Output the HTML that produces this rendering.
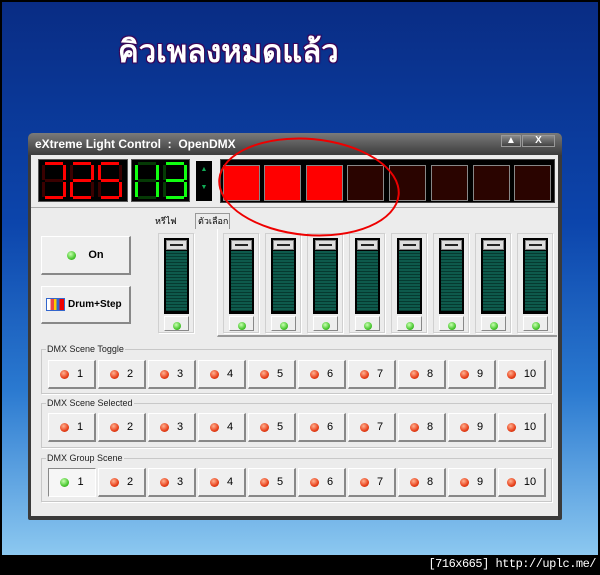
<!DOCTYPE html>
<html><head><meta charset="utf-8"><style>
*{margin:0;padding:0;box-sizing:border-box}
body{width:600px;height:575px;position:relative;overflow:hidden;background:#000;font-family:"Liberation Sans",sans-serif}
.bg{position:absolute;left:2px;top:2px;width:596px;height:553px;background:linear-gradient(180deg,#092c84 0%,#0c45ac 40%,#2a79d0 70%,#8cc8f0 100%)}
.a{position:absolute}
.title{left:118px;top:26px;font:bold 31px "Liberation Sans","Noto Sans CJK SC","WenQuanYi Zen Hei",sans-serif;color:#fff;text-shadow:0 0 2px #301040,1px 1px 0 #400060,-1px -1px 0 #400060,1px -1px 0 #400060,-1px 1px 0 #400060}
.win{left:28px;top:133px;width:534px;height:387px;background:#3a3a3a;border-radius:5px 5px 2px 2px}
.tb{left:0;top:0;width:534px;height:22px;background:linear-gradient(#7a7a7a,#3c3c3c);border-radius:5px 5px 0 0;color:#fff;font:bold 12px "Liberation Sans",sans-serif;padding:4px 7px}
.body{left:3px;top:22px;width:527px;height:361px;background:#ececec}
.tbtn{top:2px;height:12px;background:linear-gradient(#888,#444);border:1px solid #999;color:#fff;font:bold 10px sans-serif;text-align:center;line-height:10px}
.seg{background:#000;border:1px solid #555}
.lamps{left:189px;top:4px;width:335px;height:44px;background:#000;border:1px solid #444}
.lp{top:5px;width:37px;height:36px;border:1px solid #888}
.btn{background:#efefef;border:1px solid #fff;border-right:2px solid #888;border-bottom:2px solid #888;font:11px "Liberation Sans",sans-serif;color:#000;white-space:nowrap}
.led{display:inline-block;width:9px;height:9px;border-radius:50%;background:radial-gradient(circle at 40% 35%,#ffb090,#e8401a 60%,#a02000)}
.g{background:radial-gradient(circle at 40% 35%,#c8ffb0,#4ac830 60%,#208010)}
.grp{border:1px solid #c8c8c8;box-shadow:1px 1px 0 #fff}
.gl{font:9px "Liberation Sans",sans-serif;color:#222;background:#ececec;padding:0 1px}
.sb{width:48px;height:29px;text-align:center;line-height:26px}
.sb .led{vertical-align:middle;margin-right:8px}
.fd{width:36px;height:100px;border:1px solid #d0d0d0;box-shadow:1px 1px 0 #fff}
.tr{position:absolute;left:5px;top:4px;width:25px;height:76px;background:#000;padding:2px}
.tr i{display:block;width:21px;height:10px;background:#ddd;border:1px solid #888;position:relative}
.tr i:after{content:"";position:absolute;left:3px;top:3px;width:13px;height:2px;background:#222}
.tr b{display:block;width:21px;height:60px;background:repeating-linear-gradient(#0e5a4c 0 2px,#063a30 2px 3px);margin-top:1px}
.fb{position:absolute;left:5px;top:82px;width:25px;height:15px;background:#eee;border:1px solid #fff;border-right:1px solid #888;border-bottom:1px solid #888;text-align:center}
.fb .led{width:8px;height:8px;margin-top:2px}
</style></head><body>
<div class="bg"></div>
<div class="a title">คิวเพลงหมดแล้ว</div>
<div class="a win">
<div class="a tb">eXtreme Light Control&nbsp; :&nbsp; OpenDMX</div>
<div class="a tbtn" style="left:473px;width:20px">▲</div>
<div class="a tbtn" style="left:494px;width:33px">X</div>
<div class="a body">
<div class="a seg" style="left:7px;top:4px;width:90px;height:43px">
<svg width="88" height="41" viewBox="0 0 88 41">
<g fill="#3a0000">
<rect x="6" y="2" width="18" height="3"/><rect x="3" y="5" width="3" height="15"/><rect x="24" y="5" width="3" height="15"/><rect x="6" y="19" width="18" height="3"/><rect x="3" y="22" width="3" height="15"/><rect x="24" y="22" width="3" height="15"/><rect x="6" y="36" width="18" height="3"/>
<rect x="34" y="2" width="18" height="3"/><rect x="31" y="5" width="3" height="15"/><rect x="52" y="5" width="3" height="15"/><rect x="34" y="19" width="18" height="3"/><rect x="31" y="22" width="3" height="15"/><rect x="52" y="22" width="3" height="15"/><rect x="34" y="36" width="18" height="3"/>
<rect x="62" y="2" width="18" height="3"/><rect x="59" y="5" width="3" height="15"/><rect x="80" y="5" width="3" height="15"/><rect x="62" y="19" width="18" height="3"/><rect x="59" y="22" width="3" height="15"/><rect x="80" y="22" width="3" height="15"/><rect x="62" y="36" width="18" height="3"/>
</g>
<g fill="#f00">
<rect x="6" y="2" width="18" height="3"/><rect x="24" y="5" width="3" height="15"/><rect x="24" y="22" width="3" height="15"/><rect x="6" y="36" width="18" height="3"/>
<rect x="34" y="2" width="18" height="3"/><rect x="52" y="5" width="3" height="15"/><rect x="34" y="19" width="18" height="3"/><rect x="31" y="22" width="3" height="15"/><rect x="34" y="36" width="18" height="3"/>
<rect x="62" y="2" width="18" height="3"/><rect x="59" y="5" width="3" height="15"/><rect x="62" y="19" width="18" height="3"/><rect x="80" y="22" width="3" height="15"/><rect x="62" y="36" width="18" height="3"/>
</g></svg></div>
<div class="a seg" style="left:100px;top:4px;width:59px;height:43px">
<svg width="57" height="41" viewBox="0 0 57 41">
<g fill="#053a05">
<rect x="6" y="2" width="18" height="3"/><rect x="3" y="5" width="3" height="15"/><rect x="24" y="5" width="3" height="15"/><rect x="6" y="19" width="18" height="3"/><rect x="3" y="22" width="3" height="15"/><rect x="24" y="22" width="3" height="15"/><rect x="6" y="36" width="18" height="3"/>
<rect x="34" y="2" width="18" height="3"/><rect x="31" y="5" width="3" height="15"/><rect x="52" y="5" width="3" height="15"/><rect x="34" y="19" width="18" height="3"/><rect x="31" y="22" width="3" height="15"/><rect x="52" y="22" width="3" height="15"/><rect x="34" y="36" width="18" height="3"/>
</g>
<g fill="#1f1">
<rect x="3" y="5" width="3" height="15"/><rect x="3" y="22" width="3" height="15"/><rect x="24" y="5" width="3" height="15"/><rect x="24" y="22" width="3" height="15"/>
<rect x="34" y="2" width="18" height="3"/><rect x="52" y="5" width="3" height="15"/><rect x="34" y="19" width="18" height="3"/><rect x="52" y="22" width="3" height="15"/><rect x="34" y="36" width="18" height="3"/>
</g></svg></div>
<div class="a" style="left:165px;top:6px;width:16px;height:40px;background:#000;color:#1a5;font:7px sans-serif;text-align:center;line-height:18px">▲<br>▼</div>
<div class="a lamps">
<div class="a lp" style="left:2px;background:#f00"></div>
<div class="a lp" style="left:43px;background:#f00"></div>
<div class="a lp" style="left:85px;background:#f00"></div>
<div class="a lp" style="left:126px;background:#2a0400"></div>
<div class="a lp" style="left:168px;background:#2a0400"></div>
<div class="a lp" style="left:210px;background:#2a0400"></div>
<div class="a lp" style="left:252px;background:#2a0400"></div>
<div class="a lp" style="left:293px;background:#2a0400"></div>
</div>
<div class="a" style="left:0;top:52px;width:527px;height:1px;background:#aaa"></div>
<div class="a btn" style="left:10px;top:81px;width:90px;height:39px;text-align:center;line-height:37px;font-weight:bold"><span class="led g" style="vertical-align:middle;margin-right:12px"></span>On</div>
<div class="a btn" style="left:10px;top:131px;width:90px;height:38px;line-height:36px;font-weight:bold;font-size:10px;padding-left:4px"><span style="display:inline-block;vertical-align:middle;width:19px;height:13px;border:1px solid #36c;background:linear-gradient(90deg,#fff 20%,#e44 20% 40%,#fc0 40% 55%,#36c 55% 75%,#e00 75%);margin-right:3px"></span>Drum+Step</div>
<div class="a" style="left:124px;top:59px;font:9px 'Liberation Sans','Noto Sans CJK SC',sans-serif;white-space:nowrap">หรีไฟ</div>
<div class="a" style="left:164px;top:58px;width:35px;height:16px;border:1px solid #999;border-bottom:none;font:9px 'Liberation Sans','Noto Sans CJK SC',sans-serif;padding-left:2px;white-space:nowrap;overflow:hidden">ตัวเลือก</div>
<div class="a fd" style="left:127px;top:78px"><div class="tr"><i></i><b></b></div><div class="fb"><span class="led g"></span></div></div>
<div class="a" style="left:186px;top:74px;width:340px;height:108px;border-left:1px solid #fff;border-bottom:2px solid #999"></div>
<div class="a fd" style="left:192px;top:78px"><div class="tr"><i></i><b></b></div><div class="fb"><span class="led g"></span></div></div>
<div class="a fd" style="left:234px;top:78px"><div class="tr"><i></i><b></b></div><div class="fb"><span class="led g"></span></div></div>
<div class="a fd" style="left:276px;top:78px"><div class="tr"><i></i><b></b></div><div class="fb"><span class="led g"></span></div></div>
<div class="a fd" style="left:318px;top:78px"><div class="tr"><i></i><b></b></div><div class="fb"><span class="led g"></span></div></div>
<div class="a fd" style="left:360px;top:78px"><div class="tr"><i></i><b></b></div><div class="fb"><span class="led g"></span></div></div>
<div class="a fd" style="left:402px;top:78px"><div class="tr"><i></i><b></b></div><div class="fb"><span class="led g"></span></div></div>
<div class="a fd" style="left:444px;top:78px"><div class="tr"><i></i><b></b></div><div class="fb"><span class="led g"></span></div></div>
<div class="a fd" style="left:486px;top:78px"><div class="tr"><i></i><b></b></div><div class="fb"><span class="led g"></span></div></div>

<div class="a grp" style="left:10px;top:194px;width:511px;height:45px"></div>
<div class="a gl" style="left:15px;top:189px">DMX Scene Toggle</div>
<div class="a" style="left:17px;top:205px;display:flex;gap:2px">
<div class="btn sb"><span class="led"></span>1</div><div class="btn sb"><span class="led"></span>2</div><div class="btn sb"><span class="led"></span>3</div><div class="btn sb"><span class="led"></span>4</div><div class="btn sb"><span class="led"></span>5</div><div class="btn sb"><span class="led"></span>6</div><div class="btn sb"><span class="led"></span>7</div><div class="btn sb"><span class="led"></span>8</div><div class="btn sb"><span class="led"></span>9</div><div class="btn sb"><span class="led"></span>10</div>
</div>
<div class="a grp" style="left:10px;top:248px;width:511px;height:45px"></div>
<div class="a gl" style="left:15px;top:243px">DMX Scene Selected</div>
<div class="a" style="left:17px;top:258px;display:flex;gap:2px">
<div class="btn sb"><span class="led"></span>1</div><div class="btn sb"><span class="led"></span>2</div><div class="btn sb"><span class="led"></span>3</div><div class="btn sb"><span class="led"></span>4</div><div class="btn sb"><span class="led"></span>5</div><div class="btn sb"><span class="led"></span>6</div><div class="btn sb"><span class="led"></span>7</div><div class="btn sb"><span class="led"></span>8</div><div class="btn sb"><span class="led"></span>9</div><div class="btn sb"><span class="led"></span>10</div>
</div>
<div class="a grp" style="left:10px;top:303px;width:511px;height:44px"></div>
<div class="a gl" style="left:15px;top:298px">DMX Group Scene</div>
<div class="a" style="left:17px;top:313px;display:flex;gap:2px">
<div class="btn sb" style="border:1px solid #888;border-right:1px solid #fff;border-bottom:1px solid #fff;background:#f6f6f6"><span class="led g"></span>1</div><div class="btn sb"><span class="led"></span>2</div><div class="btn sb"><span class="led"></span>3</div><div class="btn sb"><span class="led"></span>4</div><div class="btn sb"><span class="led"></span>5</div><div class="btn sb"><span class="led"></span>6</div><div class="btn sb"><span class="led"></span>7</div><div class="btn sb"><span class="led"></span>8</div><div class="btn sb"><span class="led"></span>9</div><div class="btn sb"><span class="led"></span>10</div>
</div>
</div>
</div>
<div class="a" style="left:218px;top:138px;width:182px;height:98px;border:2px solid #e00;border-radius:50%;transform:rotate(5deg)"></div>
<div class="a" style="right:4px;top:557px;color:#fff;font:12px 'Liberation Mono',monospace;letter-spacing:-0.5px">[716x665] http://uplc.me/</div>
</body></html>
